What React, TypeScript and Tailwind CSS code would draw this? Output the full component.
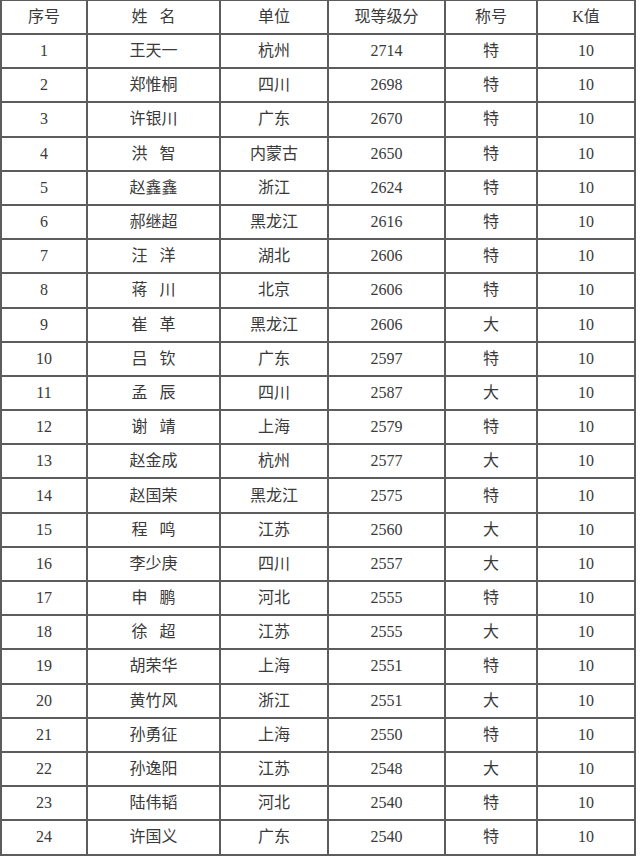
import React from 'react';

type Row = [number, string, string, number, string];

const rows: Row[] = [
  [1, '王天一', '杭州', 2714, '特'],
  [2, '郑惟桐', '四川', 2698, '特'],
  [3, '许银川', '广东', 2670, '特'],
  [4, '洪 智', '内蒙古', 2650, '特'],
  [5, '赵鑫鑫', '浙江', 2624, '特'],
  [6, '郝继超', '黑龙江', 2616, '特'],
  [7, '汪 洋', '湖北', 2606, '特'],
  [8, '蒋 川', '北京', 2606, '特'],
  [9, '崔 革', '黑龙江', 2606, '大'],
  [10, '吕 钦', '广东', 2597, '特'],
  [11, '孟 辰', '四川', 2587, '大'],
  [12, '谢 靖', '上海', 2579, '特'],
  [13, '赵金成', '杭州', 2577, '大'],
  [14, '赵国荣', '黑龙江', 2575, '特'],
  [15, '程 鸣', '江苏', 2560, '大'],
  [16, '李少庚', '四川', 2557, '大'],
  [17, '申 鹏', '河北', 2555, '特'],
  [18, '徐 超', '江苏', 2555, '大'],
  [19, '胡荣华', '上海', 2551, '特'],
  [20, '黄竹风', '浙江', 2551, '大'],
  [21, '孙勇征', '上海', 2550, '特'],
  [22, '孙逸阳', '江苏', 2548, '大'],
  [23, '陆伟韬', '河北', 2540, '特'],
  [24, '许国义', '广东', 2540, '特'],
];

const headers = ['序号', '姓 名', '单位', '现等级分', '称号', 'K值'];

const cell = 'border-2 border-[#5c5c5c] text-center align-middle p-0';

// names written with one space get a wider gap, as in the scan
const spaced = (s: string) => s.replace(' ', '   ');

export default function App() {
  return (
    <div className="w-[640px] h-[858px] bg-white overflow-hidden">
      <table
        className="table-fixed border-collapse w-[634px] text-[16px] text-[#3a3a3a] -mt-px"
        style={{ fontFamily: '"Liberation Serif", "Noto Sans CJK SC", serif' }}
      >
        <colgroup>
          <col className="w-[86px]" />
          <col className="w-[133px]" />
          <col className="w-[108px]" />
          <col className="w-[117px]" />
          <col className="w-[92px]" />
          <col className="w-[98px]" />
        </colgroup>
        <thead>
          <tr className="h-[34px]">
            {headers.map(h => (
              <th key={h} className={`${cell} font-normal whitespace-pre`}>{spaced(h)}</th>
            ))}
          </tr>
        </thead>
        <tbody>
          {rows.map(([n, name, unit, score, title]) => (
            <tr key={n} className="h-[34.2px]">
              <td className={cell}>{n}</td>
              <td className={`${cell} whitespace-pre`}>{spaced(name)}</td>
              <td className={cell}>{unit}</td>
              <td className={cell}>{score}</td>
              <td className={cell}>{title}</td>
              <td className={cell}>10</td>
            </tr>
          ))}
        </tbody>
      </table>
    </div>
  );
}
